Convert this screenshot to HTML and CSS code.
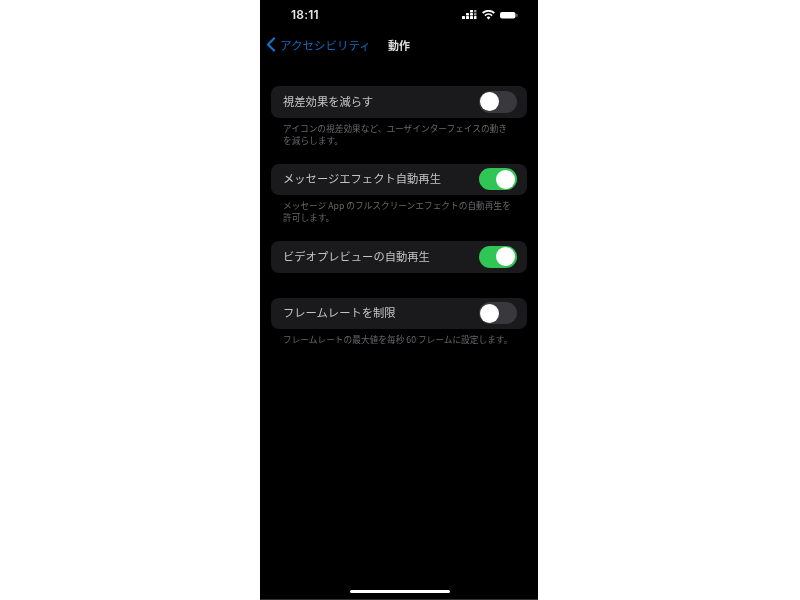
FILE: index.html
```html
<!DOCTYPE html>
<html lang="ja">
<head>
<meta charset="utf-8">
<title>動作</title>
<link rel="stylesheet" href="styles.css">
</head>
<body>
<main class="phone">
  <header class="status">
    <span class="time">18:11</span>
    <div class="status-icons">
      <svg width="15" height="9" viewBox="0 0 15 9"><g fill="#fff"><rect x="0" y="6" width="3" height="3" rx=".6"/><rect x="4" y="6" width="3" height="3" rx=".6"/><rect x="8" y="6" width="3" height="3" rx=".6"/><rect x="12" y="6" width="2.500" height="3" rx=".6"/><rect x="4" y="3" width="3" height="2.400" rx=".6"/><rect x="8" y="3" width="3" height="2.400" rx=".6"/><rect x="12" y="3" width="2.500" height="2.400" rx=".6" opacity=".6"/><rect x="8" y="0" width="3" height="2.400" rx=".6"/><rect x="12" y="0" width="2.500" height="2.400" rx=".6" opacity=".6"/></g></svg>
      <svg width="13" height="10" viewBox="0 0 13 10"><path d="M6.500 9.500 4.600 7.400a2.800 2.800 0 0 1 3.800 0zM3.500 6.200 2.300 4.900a6.200 6.200 0 0 1 8.400 0L9.500 6.200a4.500 4.500 0 0 0-6 0zM1.300 3.800 0 2.500a9.400 9.400 0 0 1 13 0l-1.300 1.300a7.600 7.600 0 0 0-10.400 0z" fill="#fff"/></svg>
      <svg width="19" height="8" viewBox="0 0 19 8"><rect x="0" y="1" width="15.500" height="6.500" rx="2" fill="#fff"/><rect x="16.300" y="2.800" width="1.300" height="3" rx=".6" fill="#777"/></svg>
    </div>
  </header>
  <nav class="nav">
    <svg class="back-icon" width="10" height="15" viewBox="0 0 10 15"><path d="M8 1.500 2 7.500l6 6" fill="none" stroke="#1672d0" stroke-width="2.200" stroke-linecap="round" stroke-linejoin="round"/></svg>
    <span class="back-label">アクセシビリティ</span>
    <span class="nav-title">動作</span>
  </nav>
  <section class="settings">
    <div class="group">
      <div class="row"><span class="label">視差効果を減らす</span><span class="switch"><span class="knob"></span></span></div>
      <p class="note">アイコンの視差効果など、ユーザインターフェイスの動きを減らします。</p>
    </div>
    <div class="group">
      <div class="row"><span class="label">メッセージエフェクト自動再生</span><span class="switch on"><span class="knob"></span></span></div>
      <p class="note">メッセージ App のフルスクリーンエフェクトの自動再生を許可します。</p>
    </div>
    <div class="group wide-gap">
      <div class="row"><span class="label">ビデオプレビューの自動再生</span><span class="switch on"><span class="knob"></span></span></div>
    </div>
    <div class="group">
      <div class="row"><span class="label">フレームレートを制限</span><span class="switch"><span class="knob"></span></span></div>
      <p class="note">フレームレートの最大値を毎秒 60 フレームに設定します。</p>
    </div>
  </section>
  <div class="home-bar"></div>
</main>
</body>
</html>
```
FILE: styles.css
```css
* { box-sizing: border-box; }
html, body { margin: 0; height: 100%; background: #fff; }
body { display: flex; justify-content: flex-start; padding-left: 260px; overflow: hidden; }
.phone {
  width: 278px;
  height: 600px;
  background: #000;
  display: flex;
  flex-direction: column;
  font-family: "Noto Sans CJK JP", "Liberation Sans", sans-serif;
  color: #e4e4e6;
  border-bottom: 1px solid #333;
}
.status { height: 29px; display: flex; align-items: center; justify-content: space-between; padding: 0 19px 0 31px; filter: blur(0.4px); }
.time { font: 600 12px/14px "Inter", "Liberation Sans", sans-serif; color: #e8e8e8; letter-spacing: .2px; }
.status-icons { display: flex; align-items: center; gap: 5px; }
.nav { height: 31px; display: flex; align-items: center; padding-left: 6px; filter: blur(0.4px); }
.back-icon { margin-right: 4px; }
.back-label { font-size: 11.500px; line-height: 16px; color: #1268bd; width: 108px; white-space: nowrap; }
.nav-title { font-size: 11px; line-height: 16px; font-weight: 700; color: #ddd; }
.settings { padding: 26px 11px 0; display: flex; flex-direction: column; filter: blur(0.4px); }
.group { margin-bottom: 17px; }
.wide-gap { margin-bottom: 25px; }
.row {
  height: 31.500px;
  background: #1a1a1c;
  border-radius: 8px;
  display: flex;
  align-items: center;
  justify-content: space-between;
  padding: 0 10.500px 0 12px;
}
.label { font-size: 11.300px; line-height: 16px; padding-bottom: 2px; color: #c4c4c6; white-space: nowrap; }
.switch { width: 38px; height: 22px; border-radius: 11px; background: #39393d; padding: 1.500px; display: flex; }
.switch.on { background: #30c655; justify-content: flex-end; }
.knob { width: 19px; height: 19px; border-radius: 50%; background: #fff; }
.note { margin: 5px 0 0; padding: 0 12px; font-size: 8.700px; line-height: 12px; color: #68686c; }
.home-bar { width: 100px; height: 3px; border-radius: 2px; background: #fff; margin: auto 0 6px 89.500px; }
```
